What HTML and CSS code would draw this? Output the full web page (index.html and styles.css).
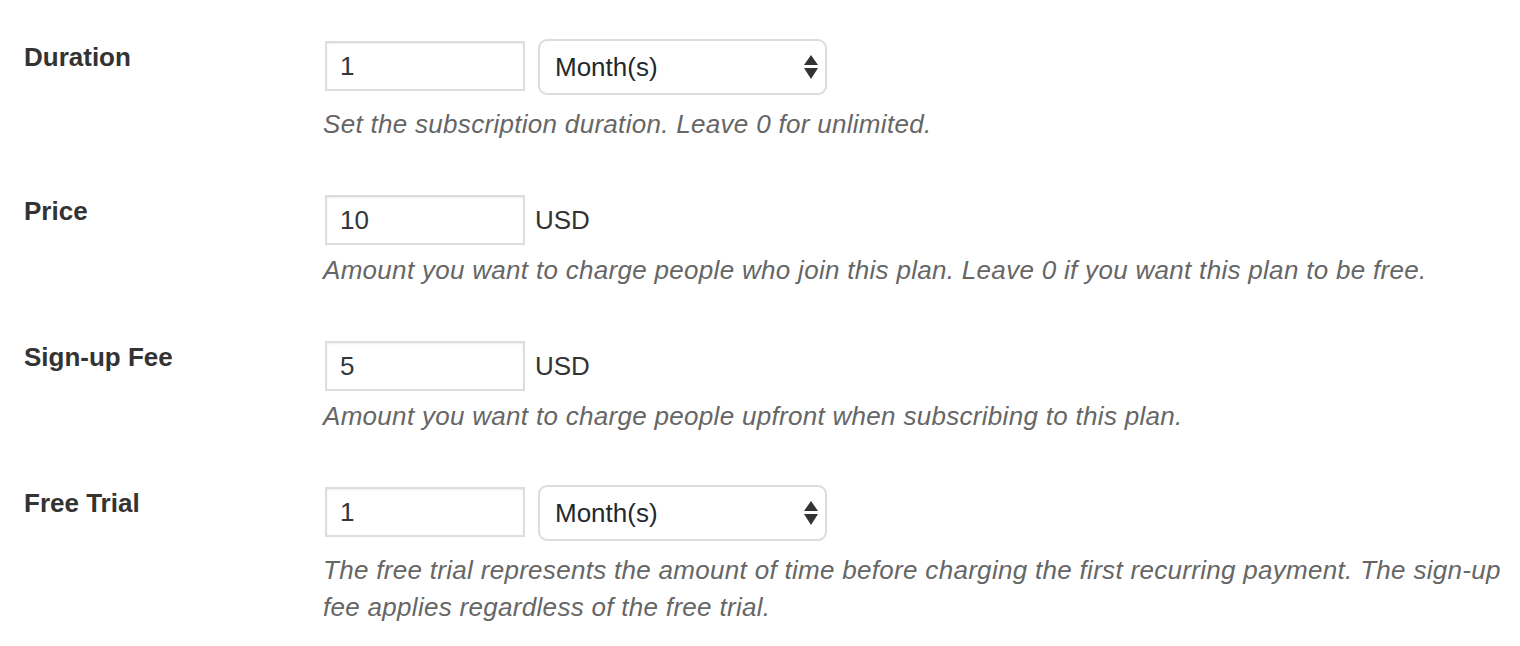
FILE: index.html
```html
<!DOCTYPE html>
<html>
<head>
<meta charset="utf-8">
<link rel="stylesheet" href="styles.css">
</head>
<body>
<div class="form">
  <div class="row">
    <div class="label">Duration</div>
    <div class="field">
      <div class="controls">
        <input class="num" type="text" value="1">
        <div class="select-wrap">
          <select class="sel"><option>Month(s)</option></select>
          <svg class="arrows" width="14" height="24" viewBox="0 0 14 24"><path d="M7 0 L14 10 L0 10 Z M0 13 L14 13 L7 24 Z" fill="#333"/></svg>
        </div>
      </div>
      <p class="desc">Set the subscription duration. Leave 0 for unlimited.</p>
    </div>
  </div>
  <div class="row">
    <div class="label">Price</div>
    <div class="field">
      <div class="controls">
        <input class="num" type="text" value="10">
        <span class="unit">USD</span>
      </div>
      <p class="desc">Amount you want to charge people who join this plan. Leave 0 if you want this plan to be free.</p>
    </div>
  </div>
  <div class="row">
    <div class="label">Sign-up Fee</div>
    <div class="field">
      <div class="controls">
        <input class="num" type="text" value="5">
        <span class="unit">USD</span>
      </div>
      <p class="desc">Amount you want to charge people upfront when subscribing to this plan.</p>
    </div>
  </div>
  <div class="row">
    <div class="label">Free Trial</div>
    <div class="field">
      <div class="controls">
        <input class="num" type="text" value="1">
        <div class="select-wrap">
          <select class="sel"><option>Month(s)</option></select>
          <svg class="arrows" width="14" height="24" viewBox="0 0 14 24"><path d="M7 0 L14 10 L0 10 Z M0 13 L14 13 L7 24 Z" fill="#333"/></svg>
        </div>
      </div>
      <p class="desc">The free trial represents the amount of time before charging the first recurring payment. The sign-up fee applies regardless of the free trial.</p>
    </div>
  </div>
</div>
</body>
</html>
```
FILE: styles.css
```css
html, body {
  margin: 0;
  padding: 0;
  background: #fff;
}
body {
  font-family: "Liberation Sans", Arial, sans-serif;
  color: #23282d;
}
.form {
  padding: 41px 10px 0 24px;
}
.row {
  display: grid;
  grid-template-columns: 301px 1fr;
  margin-bottom: 52px;
}
.label {
  font-size: 26px;
  font-weight: bold;
  line-height: 32px;
  color: #333;
}
.controls {
  display: flex;
  align-items: flex-start;
}
.num {
  box-sizing: border-box;
  width: 200px;
  height: 50px;
  margin: 0;
  padding: 0 13px;
  border: 2px solid #ddd;
  box-shadow: inset 0 1px 2px rgba(0,0,0,0.07);
  font-family: "Liberation Sans", Arial, sans-serif;
  font-size: 26px;
  color: #32373c;
  background: #fff;
  outline: none;
}
.select-wrap {
  position: relative;
  margin: -2px 0 4px 13px;
}
.sel {
  box-sizing: border-box;
  width: 289px;
  height: 56px;
  margin: 0;
  padding: 0 40px 0 15px;
  border: 2px solid #dcdcdc;
  border-radius: 9px;
  background: #fff;
  -webkit-appearance: none;
  appearance: none;
  font-family: "Liberation Sans", Arial, sans-serif;
  font-size: 26px;
  color: #23282d;
  outline: none;
}
.arrows {
  position: absolute;
  right: 9px;
  top: 16px;
  pointer-events: none;
}
.unit {
  margin-left: 10px;
  font-size: 26px;
  line-height: 50px;
  color: #333;
}
.desc {
  margin: 7px 0 0 -2px;
  font-size: 26px;
  line-height: 37px;
  letter-spacing: 0.3px;
  font-style: italic;
  color: #666;
}
```
